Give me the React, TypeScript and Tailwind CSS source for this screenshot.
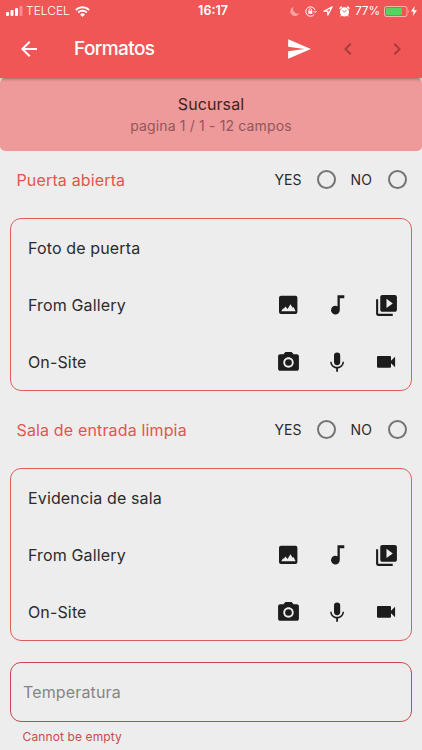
import { MdArrowBack, MdChevronLeft, MdChevronRight, MdPhotoCamera, MdSend, MdVideoLibrary } from 'react-icons/md';

function ImageIcon() {
  return (
    <svg width="24" height="24" viewBox="0 0 24 24" fill="currentColor">
      <path
        fillRule="evenodd"
        d="M5 2.7h14.4a2 2 0 0 1 2 2V19a2 2 0 0 1-2 2H5a2 2 0 0 1-2-2V4.7a2 2 0 0 1 2-2zM5.3 18.2h14.3l-2.1-4.2-.8.7-2.3-3.4-2.8 4.7-2.2-2.4-1.5 2.2-.8-.6z"
      />
    </svg>
  );
}

function MusicIcon() {
  return (
    <svg width="24" height="24" viewBox="0 0 24 24" fill="currentColor">
      <path d="M12.5 2.3h6.8v3h-4.5V17a4.4 4.4 0 1 1-2.3-3.8z" />
    </svg>
  );
}

function MicIcon() {
  return (
    <svg width="24" height="24" viewBox="0 0 24 24" fill="currentColor">
      <rect x="9" y="2.5" width="6.2" height="12.7" rx="3.1" />
      <path d="M17.5 11.7c0 3-2.6 5.1-5.4 5.1s-5.4-2.1-5.4-5.1H5.2c0 3.4 2.7 6.2 6 6.7v3.3H13v-3.3c3.3-.5 6-3.3 6-6.7z" />
    </svg>
  );
}

function VideoIcon() {
  return (
    <svg width="24" height="24" viewBox="0 0 24 24" fill="currentColor">
      <path d="M4 6h12a1 1 0 0 1 1 1v3.7l4.1-3.9v10.4L17 13.3v3.5a1 1 0 0 1-1 1H4a1 1 0 0 1-1-1V7a1 1 0 0 1 1-1z" />
    </svg>
  );
}

function StatusBar() {
  return (
    <div className="grid h-[22px] grid-cols-[1fr_auto_1fr] items-center pr-[5px] pl-[6px] text-[12px] text-white">
      <div className="flex items-center">
        <svg width="17" height="10" viewBox="0 0 17 10" fill="white">
          <rect x="0" y="6" width="3" height="4" rx="1" />
          <rect x="4.5" y="4" width="3" height="6" rx="1" />
          <rect x="9" y="2" width="3" height="8" rx="1" />
          <rect x="13.5" y="0" width="3" height="10" rx="1" opacity="0.35" />
        </svg>
        <span className="ml-[3px] w-[43px] text-[12px] font-light whitespace-nowrap">TELCEL</span>
        <svg className="ml-[6px]" width="15" height="11" viewBox="0 0 15 11" fill="none" stroke="white" strokeWidth="1.9">
          <path d="M.8 4a9.6 9.6 0 0 1 13.4 0" />
          <path d="M3.2 6.5a6.1 6.1 0 0 1 8.6 0" />
          <path d="M7.5 11 5.1 8.5a3.4 3.4 0 0 1 4.8 0z" fill="white" stroke="none" />
        </svg>
      </div>
      <span className="pl-[3px] text-[12.5px] font-semibold">16:17</span>
      <div className="flex items-center justify-end">
        <svg width="10" height="11" viewBox="0 0 10 11" fill="white" opacity="0.45">
          <path d="M3.5.8a4.8 4.8 0 1 0 6 6.5A4.8 4.8 0 0 1 3.5.8z" />
        </svg>
        <svg className="ml-[5px]" width="12" height="11" viewBox="0 0 12 11" fill="none" stroke="white">
          <path d="M9.3 8.3A4.7 4.7 0 1 1 10 4.2M8.5 5l1.6 1.6L11.6 5" />
          <rect x="3.3" y="4.8" width="4" height="3" fill="white" stroke="none" />
          <path d="M4 5V4a1.3 1.3 0 0 1 2.6 0v1" strokeWidth=".9" />
        </svg>
        <svg className="ml-[6px]" width="10" height="10" viewBox="0 0 10 10" fill="none" stroke="white" strokeWidth="1.2">
          <path d="M.9 5.2 9.2.8 4.8 9.1V5.2z" strokeLinejoin="round" />
        </svg>
        <svg className="ml-[6px]" width="11" height="11" viewBox="0 0 11 11" fill="white">
          <circle cx="5.5" cy="5.9" r="4.6" />
          <path d="M.5 2.7 2.8.6M8.2.6l2.3 2.1" stroke="white" strokeWidth="1.5" />
          <path d="M2.4 9.2l-.9 1.2M8.6 9.2l.9 1.2" stroke="white" />
          <path d="M3.6 4.2l1.9 2 2-2.4" fill="none" stroke="#f05656" strokeWidth=".9" />
        </svg>
        <span className="ml-[5px] w-[26px] text-[12px] tracking-[-0.2px]">77%</span>
        <svg className="ml-[3px]" width="27" height="11" viewBox="0 0 27 11">
          <rect x=".5" y=".5" width="22.5" height="10" rx="2" fill="none" stroke="white" strokeOpacity=".55" />
          <rect x="2" y="2" width="16" height="7" rx="1" fill="#54d45f" />
          <path d="M24.4 3.7q1.6 1.8 0 3.6z" fill="white" opacity=".55" />
        </svg>
        <svg width="6" height="10" viewBox="0 0 6 10" fill="white">
          <path d="M3.6 0 0 5.6h2.6L1.8 10 6 4.2H3.2z" />
        </svg>
      </div>
    </div>
  );
}

function Question({ label }: { label: string }) {
  return (
    <div className="flex h-[57px] items-center pr-[15.5px] pl-[16.5px]">
      <h2 className="flex-1 text-[16px] tracking-[0.15px] text-[#e2564c]">{label}</h2>
      <span className="w-[42px] text-[14px] tracking-[0.1px]">YES</span>
      <span className="size-[19px] rounded-full border-2 border-[#747474]" />
      <span className="ml-[15px] w-[37px] text-[14px] tracking-[0.1px]">NO</span>
      <span className="size-[19px] rounded-full border-2 border-[#747474]" />
    </div>
  );
}

function EvidenceCard({ title }: { title: string }) {
  return (
    <section className="mx-[10px] rounded-[11px] border border-[#de5f59] pr-[13px] pl-[17px] text-[16px] tracking-[0.14px]">
      <div className="flex h-[57px] items-center">{title}</div>
      <div className="flex h-[57px] items-center">
        <span className="flex-1">From Gallery</span>
        <div className="flex items-center gap-[25px] text-[#1c1c1c]">
          <ImageIcon />
          <MusicIcon />
          <MdVideoLibrary className="mt-px -mr-px" size={25} />
        </div>
      </div>
      <div className="flex h-[57px] items-center">
        <span className="flex-1">On-Site</span>
        <div className="flex items-center gap-[25px] text-[#1c1c1c]">
          <MdPhotoCamera className="mt-px -mr-px" size={25} />
          <MicIcon />
          <VideoIcon />
        </div>
      </div>
    </section>
  );
}

export default function App() {
  return (
    <main className="h-[750px] w-full overflow-hidden bg-[#ededed] font-['Inter',sans-serif] text-[#2b2b2b]">
      <header className="relative h-[78px] bg-[#f05656] shadow-[0_1px_3px_rgba(0,0,0,0.35)]">
        <StatusBar />
        <div className="flex h-[54px] items-center pl-[17px] text-white">
          <MdArrowBack size={24} />
          <h1 className="ml-[33px] flex-1 pt-px text-[19px] font-medium tracking-[-0.6px]">Formatos</h1>
          <MdSend size={26} />
          <MdChevronLeft className="ml-[24px] text-[#a83c3c]" size={24} />
          <MdChevronRight className="mr-[13px] ml-[25px] text-[#a83c3c]" size={24} />
        </div>
      </header>
      <div className="h-[73px] rounded-[5px] bg-[#ef9a9a] pt-[14px] text-center">
        <p className="text-[16px] leading-[24px] tracking-[0.1px] text-[#421f20]">Sucursal</p>
        <p className="text-[14px] leading-[19px] tracking-[0.15px] text-[#935659]">pagina 1 / 1 - 12 campos</p>
      </div>
      <Question label="Puerta abierta" />
      <div className="pt-[10px]">
        <EvidenceCard title="Foto de puerta" />
      </div>
      <div className="pt-[10px]">
        <Question label="Sala de entrada limpia" />
      </div>
      <div className="pt-[10px]">
        <EvidenceCard title="Evidencia de sala" />
      </div>
      <div className="mx-[10px] mt-[21px] flex h-[60px] items-center rounded-[11px] border border-[#c9484f] pl-[12px] text-[16px] tracking-[0.14px] text-[#858585]">
        Temperatura
      </div>
      <p className="mt-[6px] ml-[22.5px] text-[12px] leading-[18px] tracking-[0.12px] text-[#ca4b4d]">Cannot be empty</p>
    </main>
  );
}
